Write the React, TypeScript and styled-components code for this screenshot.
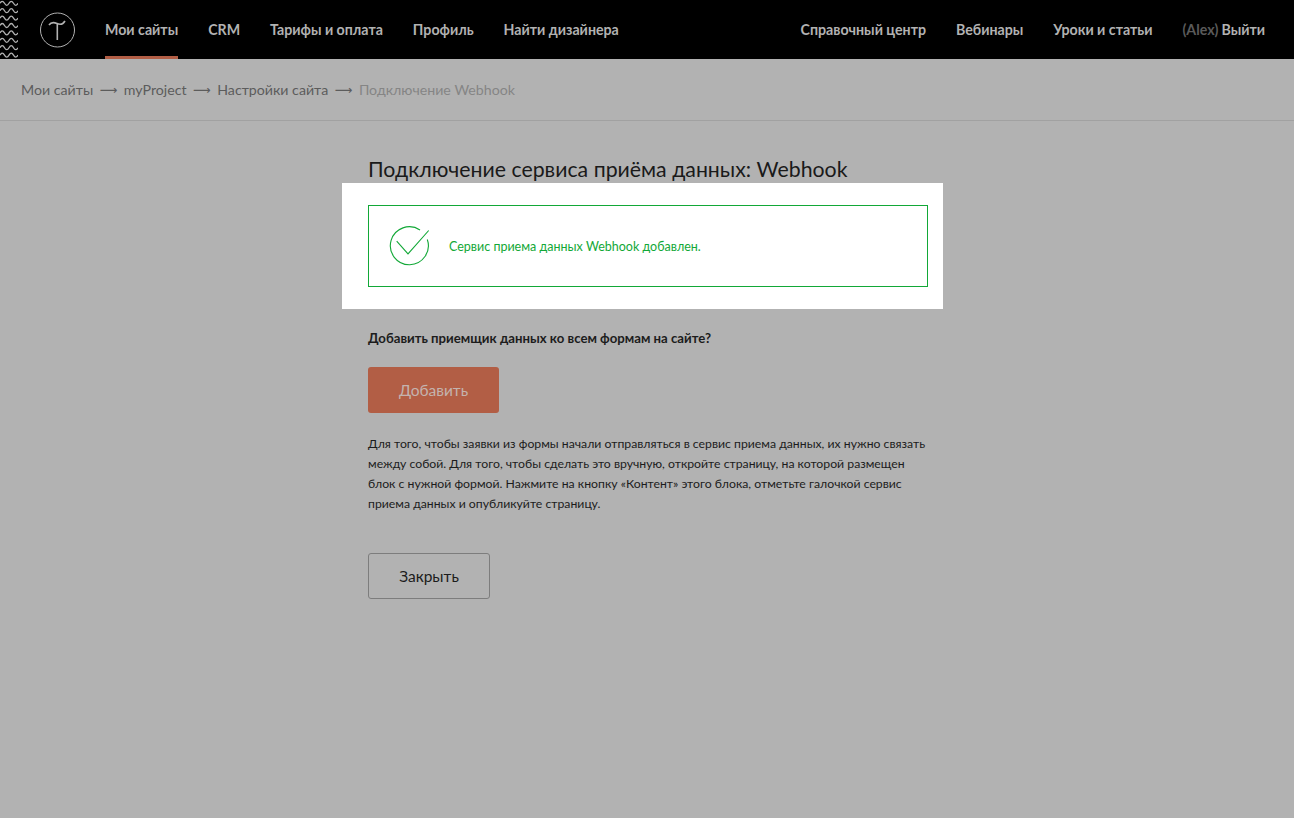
import styled, { createGlobalStyle } from "styled-components";

const GlobalStyle = createGlobalStyle`
  html, body {
    margin: 0;
    padding: 0;
    background: #b2b2b2;
  }
  body {
    font-family: "Lato", "Noto Sans", sans-serif;
    color: #1c1c1c;
  }
`;

const Page = styled.div`
  min-height: 818px;
  background: #b2b2b2;
`;

const TopBar = styled.header`
  height: 59px;
  background: #000;
  display: flex;
  align-items: stretch;
  justify-content: space-between;
  padding-right: 29px;
`;

const NavGroup = styled.nav`
  display: flex;
  align-items: stretch;
  gap: 30px;
`;

const Brand = styled.div`
  display: flex;
  align-items: center;
  gap: 22px;
`;

const WaveStrip = styled.svg`
  width: 18px;
  height: 59px;
  display: block;
`;

const Logo = styled.svg`
  width: 35px;
  height: 35px;
  overflow: visible;
`;

const NavLink = styled.a<{ $active?: boolean }>`
  display: flex;
  align-items: center;
  font-size: 14.2px;
  font-weight: 700;
  color: #b2b2b2;
  box-sizing: border-box;
  border-top: 3px solid transparent;
  border-bottom: 3px solid ${(p) => (p.$active ? "#b25e45" : "transparent")};
`;

const Muted = styled.span`
  color: #5a5a5a;
  margin-right: 3px;
`;

const Crumbs = styled.div`
  height: 62px;
  box-sizing: border-box;
  border-bottom: 1px solid #a1a1a1;
  padding: 0 21px;
  display: flex;
  align-items: center;
  gap: 6.5px;
  font-size: 14.2px;
  color: #5c5c5c;
`;

const CrumbCurrent = styled.span`
  color: #858585;
`;

const Arrow = styled.span`
  font-family: "DejaVu Sans", sans-serif;
  font-size: 12.3px;
  color: #5c5c5c;
`;

const Content = styled.main`
  width: 560px;
  margin-left: 368px;
  padding-top: 35px;
`;

const Title = styled.h1`
  margin: 0;
  font-size: 21.3px;
  line-height: 27px;
  font-weight: 400;
  color: #1a1a1a;
  white-space: nowrap;
`;

const Spotlight = styled.section`
  background: #fff;
  margin: 0 -15px 0 -26px;
  padding: 22px 15px 22px 26px;
`;

const Notice = styled.div`
  height: 82px;
  box-sizing: border-box;
  border: 1px solid #12a837;
  display: flex;
  align-items: center;
  padding-left: 20px;
  gap: 20px;
  color: #12a837;
  font-size: 12.5px;
`;

const CheckIcon = styled.svg`
  width: 40px;
  height: 40px;
  flex: none;
  overflow: visible;
`;

const Question = styled.p`
  margin: 21px 0 0;
  font-size: 13.2px;
  line-height: 16px;
  font-weight: 700;
  color: #1c1c1c;
`;

const AddButton = styled.button`
  display: block;
  margin-top: 21px;
  width: 131px;
  height: 46px;
  border: 0;
  border-radius: 3px;
  background: #b25e45;
  color: #c4b3ae;
  font-family: inherit;
  font-size: 15.5px;
`;

const Help = styled.p`
  margin: 21px 0 0;
  font-size: 12.25px;
  line-height: 20px;
  color: #1c1c1c;
  white-space: nowrap;
`;

const CloseButton = styled.button`
  display: block;
  margin-top: 39px;
  width: 122px;
  height: 46px;
  box-sizing: border-box;
  border: 1px solid #7d7d7d;
  border-radius: 3px;
  background: transparent;
  color: #1c1c1c;
  font-family: inherit;
  font-size: 15.5px;
`;

const waves = Array.from({ length: 8 }, (_, i) => 3.3 + i * 7.4);

const App = () => (
  <Page>
    <GlobalStyle />
    <TopBar>
      <NavGroup>
        <Brand>
          <WaveStrip viewBox="0 0 18 59">
            {waves.map((y) => (
              <path
                key={y}
                d={`M0 ${y}q2.25 -4 4.5 0t4.5 0t4.5 0t4.5 0`}
                fill="none"
                stroke="#b2b2b2"
                strokeWidth="1.3"
              />
            ))}
          </WaveStrip>
          <Logo viewBox="0 0 35 35">
            <circle cx="17.5" cy="18" r="17" fill="none" stroke="#b2b2b2" strokeWidth="1" />
            <path
              d="M9 13c2-3 4.500-3 8-1.500s6 1 8-2.500M17.300 11.500V28"
              fill="none"
              stroke="#b2b2b2"
              strokeWidth="1.600"
            />
          </Logo>
        </Brand>
        <NavLink $active>Мои сайты</NavLink>
        <NavLink>CRM</NavLink>
        <NavLink>Тарифы и оплата</NavLink>
        <NavLink>Профиль</NavLink>
        <NavLink>Найти дизайнера</NavLink>
      </NavGroup>
      <NavGroup>
        <NavLink>Справочный центр</NavLink>
        <NavLink>Вебинары</NavLink>
        <NavLink>Уроки и статьи</NavLink>
        <NavLink>
          <Muted>(Alex)</Muted>Выйти
        </NavLink>
      </NavGroup>
    </TopBar>
    <Crumbs>
      <span>Мои сайты</span>
      <Arrow>⟶</Arrow>
      <span>myProject</span>
      <Arrow>⟶</Arrow>
      <span>Настройки сайта</span>
      <Arrow>⟶</Arrow>
      <CrumbCurrent>Подключение Webhook</CrumbCurrent>
    </Crumbs>
    <Content>
      <Title>Подключение сервиса приёма данных: Webhook</Title>
      <Spotlight>
        <Notice>
          <CheckIcon viewBox="0 0 40 40">
            <path d="M38.300 13.500A19 19 0 1 1 31 4" fill="none" stroke="#12a837" strokeWidth="1.100" />
            <path d="M7.700 15.200L19 27.800L39.700 4.500" fill="none" stroke="#12a837" strokeWidth="1.100" />
          </CheckIcon>
          Сервис приема данных Webhook добавлен.
        </Notice>
      </Spotlight>
      <Question>Добавить приемщик данных ко всем формам на сайте?</Question>
      <AddButton>Добавить</AddButton>
      <Help>
        Для того, чтобы заявки из формы начали отправляться в сервис приема данных, их нужно связать
        <br />
        между собой. Для того, чтобы сделать это вручную, откройте страницу, на которой размещен
        <br />
        блок с нужной формой. Нажмите на кнопку «Контент» этого блока, отметьте галочкой сервис
        <br />
        приема данных и опубликуйте страницу.
      </Help>
      <CloseButton>Закрыть</CloseButton>
    </Content>
  </Page>
);

export default App;
